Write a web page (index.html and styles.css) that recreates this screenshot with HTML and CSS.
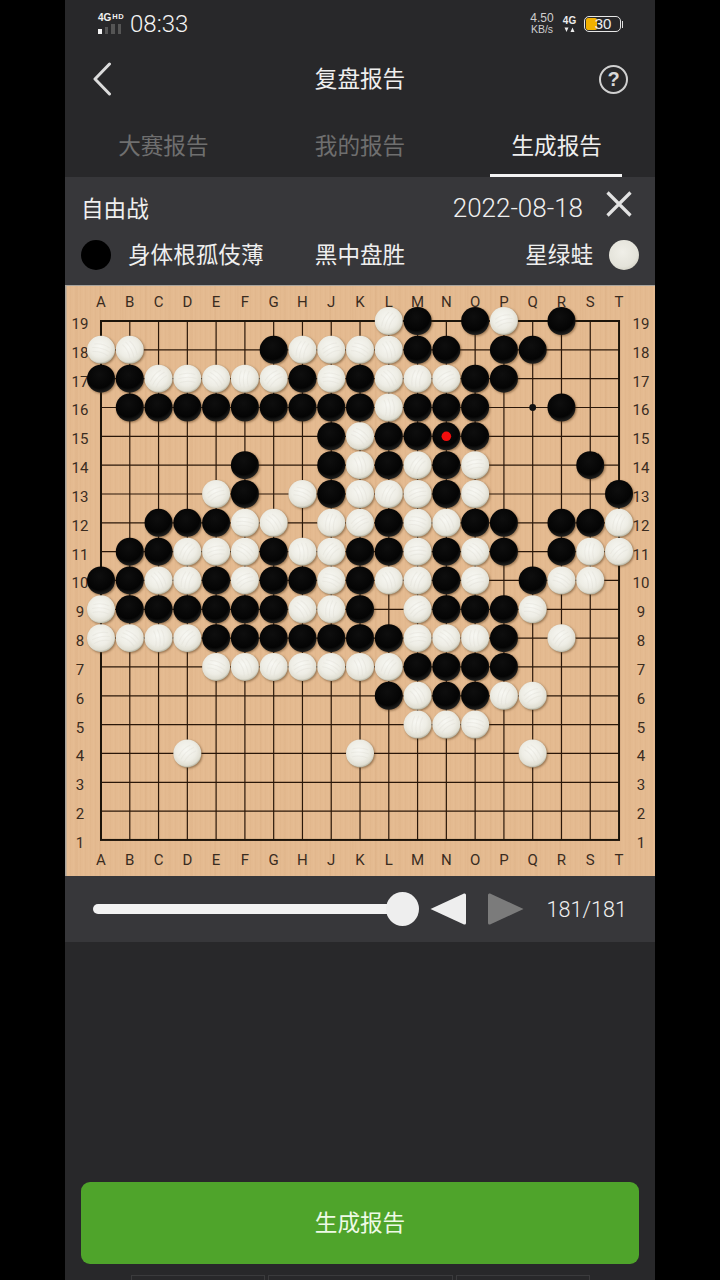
FILE: index.html
```
<!DOCTYPE html>
<html lang="zh">
<head>
<meta charset="utf-8">
<title>复盘报告</title>
<link rel="stylesheet" href="styles.css">
</head>
<body>
<div class="phone">
  <div class="status">
    <div class="status-left">
      <div class="sig">
        <div class="sig-text"><span class="sig-4g">4G</span><span class="sig-hd">HD</span></div>
        <div class="bars"><i class="on"></i><i></i><i></i><i></i></div>
      </div>
      <span class="clock">08:33</span>
    </div>
    <div class="status-right">
      <div class="speed"><span>4.50</span><span class="unit">KB/s</span></div>
      <div class="net"><span>4G</span>
        <svg class="arrows" width="11" height="6" viewBox="0 0 11 6"><path d="M0.500 0.500 H4.500 L2.500 5 Z M6.500 5 H10.500 L8.500 0.500 Z" fill="#ececec"/></svg>
      </div>
      <div class="battery"><div class="batt-body"><i class="batt-fill"></i><span class="batt-num">30</span></div><i class="batt-cap"></i></div>
    </div>
  </div>
  <div class="nav">
    <svg class="back" width="20" height="34" viewBox="0 0 20 34"><path d="M17.5 2 L3 17 L17.5 32" fill="none" stroke="#dcdcdc" stroke-width="3" stroke-linecap="round" stroke-linejoin="round"/></svg>
    <div class="title">复盘报告</div>
    <div class="help">?</div>
  </div>
  <div class="tabs">
    <div class="tab">大赛报告</div>
    <div class="tab">我的报告</div>
    <div class="tab active">生成报告</div>
  </div>
  <div class="info">
    <div class="info-row first">
      <span class="t">自由战</span>
      <span class="date">2022-08-18</span>
      <svg class="close" width="36" height="36" viewBox="0 0 36 36"><path d="M6.500 6.500 L29.500 29.500 M29.500 6.500 L6.500 29.500" stroke="#e2e2e2" stroke-width="3.200" fill="none"/></svg>
    </div>
    <div class="info-row second">
      <div class="side left"><i class="dot black"></i><span class="t">身体根孤伎薄</span></div>
      <span class="t result">黑中盘胜</span>
      <div class="side right"><span class="t">星绿蛙</span><i class="dot white"></i></div>
    </div>
  </div>
  <div class="board" id="board"></div>
  <div class="controls">
    <div class="slider"><div class="track"></div><div class="thumb"></div></div>
    <svg class="arrow" width="38" height="34" viewBox="0 0 38 34"><path d="M1.500 17 L35 1.500 Q37 1 37 3 L37 31 Q37 33 35 32.500 Z" fill="#eeeeee"/></svg>
    <svg class="arrow next" width="38" height="34" viewBox="0 0 38 34"><path d="M36.500 17 L3 1.500 Q1 1 1 3 L1 31 Q1 33 3 32.500 Z" fill="#7b7b7b"/></svg>
    <span class="count">181/181</span>
  </div>
  <div class="spacer"></div>
  <div class="btn">生成报告</div>
  <div class="foot"><i class="f1"></i><i class="f2"></i><i class="f3"></i></div>
</div>
<script src="app.js"></script>
</body>
</html>
```
FILE: styles.css
```
* { box-sizing: border-box; }
html, body { margin: 0; padding: 0; background: #000; }
body { font-family: "Noto Sans CJK SC", "Noto Sans", sans-serif; color: #eee; }
.phone { width: 590px; height: 1280px; margin: 0 auto; background: #28282a; display: flex; flex-direction: column; overflow: hidden; }

.status { height: 46px; display: flex; justify-content: space-between; align-items: center; padding: 2px 32px 0 33px; }
.status-left { display: flex; align-items: center; gap: 6px; }
.sig { width: 26px; display: flex; flex-direction: column; gap: 2px; margin-bottom: 2px; }
.sig-text { font: bold 10px/9px "Liberation Sans", sans-serif; color: #f0f0f0; white-space: nowrap; display: flex; gap: 1px; align-items: flex-start; }
.sig-hd { font-size: 7.5px; line-height: 7px; letter-spacing: 0.4px; }
.bars { display: flex; gap: 3px; align-items: flex-end; height: 10px; }
.bars i { width: 3.500px; height: 10px; background: #555; }
.bars i:first-child { height: 5px; }
.bars i:nth-child(2) { height: 7px; }
.bars i.on { background: #f2f2f2; }
.clock { font: 300 24px/26px Roboto, "Liberation Sans", sans-serif; color: #f4f4f4; }
.status-right { display: flex; align-items: center; }
.speed { display: flex; flex-direction: column; align-items: center; font: 12px/11px "Liberation Sans", sans-serif; color: #cfcfcf; width: 27px; white-space: nowrap; }
.speed .unit { font-size: 10.5px; }
.net { display: flex; flex-direction: column; align-items: center; gap: 1px; font: bold 10px/10px "Liberation Sans", sans-serif; color: #ececec; margin-left: 7px; width: 14px; }
.arrows { display: block; }
.battery { display: flex; align-items: center; margin-left: 7px; gap: 1px; }
.batt-body { position: relative; width: 37px; height: 16px; border: 1.5px solid #e6e6e6; border-radius: 5px; overflow: hidden; font: 15px/13px "Liberation Sans", sans-serif; color: #eee; text-align: center; }
.batt-fill { position: absolute; left: 1px; top: 1px; bottom: 1px; width: 11px; background: #f2b100; border-radius: 2px; }
.batt-num { position: relative; padding-left: 2px; }
.batt-cap { width: 1.5px; height: 7px; background: #ddd; }

.nav { height: 66px; display: grid; grid-template-columns: 1fr auto 1fr; align-items: center; padding: 0 27px 0 27px; }
.back { display: block; }
.title { font-size: 22.6px; line-height: 30px; color: #efefef; padding-bottom: 2px; }
.help { justify-self: end; width: 29px; height: 29px; border: 2px solid #d0d0d0; border-radius: 50%; color: #d8d8d8; font: bold 20px/25px "Liberation Sans", sans-serif; text-align: center; }

.tabs { height: 65px; display: flex; }
.tab { flex: 1; text-align: center; font-size: 22.6px; line-height: 32px; padding-top: 17px; color: #6f6f6f; position: relative; }
.tab.active { color: #efefef; }
.tab.active::after { content: ""; position: absolute; left: 32px; right: 33px; bottom: 0; height: 3px; background: #f4f4f4; }

.info { height: 108px; background: #37373a; padding: 0 16px; display: flex; flex-direction: column; }
.info-row { display: flex; align-items: center; justify-content: space-between; position: relative; }
.info-row.first { height: 60px; padding-top: 4px; padding-bottom: 2px; padding-right: 56px; }
.info-row.second { height: 32px; margin-top: 2px; }
.second .t { padding-bottom: 2px; }
.t { font-size: 22.6px; line-height: 30px; color: #efefef; white-space: nowrap; }
.date { font: 300 26px/30px Roboto, "Liberation Sans", sans-serif; color: #efefef; }
.close { position: absolute; right: 2px; top: 9px; }
.side { display: flex; align-items: center; width: 200px; }
.side.left { gap: 17px; }
.side.right { gap: 16px; justify-content: flex-end; }
.dot { display: block; width: 30px; height: 30px; border-radius: 50%; }
.dot.black { background: #000; }
.dot.white { background: radial-gradient(circle at 45% 40%, #f0efe8 0%, #e4e3da 60%, #bdbbab 100%); }

.board { height: 591px; background-color: #e4ba90; box-shadow: inset 1.5px 1px 0 #a8a39c; background-image: repeating-linear-gradient(90deg, rgba(150,90,40,0.03) 0 1px, transparent 1px 3px, rgba(255,240,210,0.03) 3px 4px, transparent 4px 5px), repeating-linear-gradient(90deg, transparent 0 11px, rgba(150,90,40,0.03) 11px 13px, transparent 13px 23px); }
.board svg { display: block; }
.lab { font: 15px Roboto, "Liberation Sans", sans-serif; fill: #3a2c1f; text-anchor: middle; }
.ln { stroke: #2a1709; stroke-width: 1.2; }
.edge { fill: none; stroke: #1c140a; stroke-width: 2; }
.stones { filter: drop-shadow(1px 1.5px 1px rgba(70,40,10,0.5)); }
.vein { fill: none; stroke: #dddbd0; stroke-width: 1; opacity: 0.35; }

.controls { height: 66px; background: #37373a; display: flex; align-items: center; padding: 0 28px 0 28px; }
.slider { width: 326px; height: 34px; position: relative; display: flex; align-items: center; }
.track { width: 310px; height: 10px; background: #f2f2f2; border-radius: 5px; }
.thumb { position: absolute; right: 0; top: 0; width: 33px; height: 34px; border-radius: 50%; background: #eeeeee; }
.arrow { display: block; margin-left: 10px; }
.arrow.next { margin-left: 20px; }
.count { font: 300 21.6px/30px Roboto, "Liberation Sans", sans-serif; color: #efefef; margin-left: auto; padding-top: 2px; }

.spacer { flex: 1; }
.btn { height: 82px; margin: 0 16px; background: #4fa42b; border-radius: 9px; text-align: center; font-size: 22.6px; line-height: 80px; color: #eefae6; }
.foot { height: 16px; display: flex; gap: 3px; padding: 11px 65px 0 66px; }
.foot i { display: block; height: 6px; border: 1px solid #3b3b3d; border-bottom: 0; }
.f1 { width: 134px; }
.f2 { width: 185px; }
.f3 { width: 134px; }
```
FILE: app.js
```
(function () {
  var NS = "http://www.w3.org/2000/svg";
  var cols = "ABCDEFGHJKLMNOPQRST";
  var X0 = 36, Y0 = 36, DX = 28.78, DY = 28.83;
  var rows = {
    19: "L.w M.b O.b P.w R.b",
    18: "A.w B.w G.b H.w J.w K.w L.w M.b N.b P.b Q.b",
    17: "A.b B.b C.w D.w E.w F.w G.w H.b J.w K.b L.w M.w N.w O.b P.b",
    16: "B.b C.b D.b E.b F.b G.b H.b J.b K.b L.w M.b N.b O.b R.b",
    15: "J.b K.w L.b M.b N.b O.b",
    14: "F.b J.b K.w L.b M.w N.b O.w S.b",
    13: "E.w F.b H.w J.b K.w L.w M.w N.b O.w T.b",
    12: "C.b D.b E.b F.w G.w J.w K.w L.b M.w N.w O.b P.b R.b S.b T.w",
    11: "B.b C.b D.w E.w F.w G.b H.w J.w K.b L.b M.w N.b O.w P.b R.b S.w T.w",
    10: "A.b B.b C.w D.w E.b F.w G.b H.b J.w K.b L.w M.w N.b O.w Q.b R.w S.w",
    9: "A.w B.b C.b D.b E.b F.b G.b H.w J.w K.b M.w N.b O.b P.b Q.w",
    8: "A.w B.w C.w D.w E.b F.b G.b H.b J.b K.b L.b M.w N.w O.w P.b R.w",
    7: "E.w F.w G.w H.w J.w K.w L.w M.b N.b O.b P.b",
    6: "L.b M.w N.b O.b P.w Q.w",
    5: "M.w N.w O.w",
    4: "D.w K.w Q.w"
  };
  function el(name, attrs, parent, text) {
    var e = document.createElementNS(NS, name);
    for (var k in attrs) e.setAttribute(k, attrs[k]);
    if (text !== undefined) e.textContent = text;
    if (parent) parent.appendChild(e);
    return e;
  }
  function px(i) { return X0 + DX * i; }
  function py(n) { return Y0 + DY * (19 - n); }
  var svg = el("svg", { width: 590, height: 591, viewBox: "0 0 590 591" });
  var defs = el("defs", {}, svg);
  var gw = el("radialGradient", { id: "gw", cx: "46%", cy: "40%", r: "60%" }, defs);
  el("stop", { offset: "0%", "stop-color": "#f8f8f3" }, gw);
  el("stop", { offset: "60%", "stop-color": "#eeede5" }, gw);
  el("stop", { offset: "88%", "stop-color": "#e0ded2" }, gw);
  el("stop", { offset: "100%", "stop-color": "#b4b2a0" }, gw);
  var gb = el("radialGradient", { id: "gb", cx: "45%", cy: "35%", r: "70%" }, defs);
  el("stop", { offset: "0%", "stop-color": "#0e0e0e" }, gb);
  el("stop", { offset: "70%", "stop-color": "#040404" }, gb);
  el("stop", { offset: "100%", "stop-color": "#2c2c2a" }, gb);

  var i, n;
  for (i = 1; i < 18; i++) {
    el("line", { class: "ln", x1: px(i), x2: px(i), y1: py(19), y2: py(1) }, svg);
    el("line", { class: "ln", x1: px(0), x2: px(18), y1: py(i + 1), y2: py(i + 1) }, svg);
  }
  el("rect", { class: "edge", x: px(0), y: py(19), width: DX * 18, height: DY * 18 }, svg);
  el("circle", { cx: px(15), cy: py(16), r: 3.4, fill: "#111" }, svg);

  for (i = 0; i < 19; i++) {
    el("text", { class: "lab", x: px(i), y: 22 }, svg, cols[i]);
    el("text", { class: "lab", x: px(i), y: 580 }, svg, cols[i]);
  }
  for (n = 1; n <= 19; n++) {
    el("text", { class: "lab", x: 15, y: py(n) + 8 }, svg, String(n));
    el("text", { class: "lab", x: 576, y: py(n) + 8 }, svg, String(n));
  }
  var g = el("g", { class: "stones" }, svg);
  var seed = 0;
  Object.keys(rows).forEach(function (r) {
    rows[r].split(" ").forEach(function (s) {
      var c = cols.indexOf(s[0]), x = px(c), y = py(+r), w = s[2] === "w";
      el("circle", { cx: x, cy: y, r: 14, fill: w ? "url(#gw)" : "url(#gb)" }, g);
      if (w) {
        seed += 47;
        el("path", {
          class: "vein",
          d: "M-4 -8 Q-7 0 -4 8 M0 -9 Q-3 0 0 9 M4 -8 Q1 0 4 8",
          transform: "translate(" + x + " " + y + ") rotate(" + (seed % 180) + ")"
        }, g);
      }
    });
  });
  el("circle", { cx: px(12), cy: py(15), r: 4.8, fill: "#f20d0d" }, svg);
  document.getElementById("board").appendChild(svg);
})();
```
